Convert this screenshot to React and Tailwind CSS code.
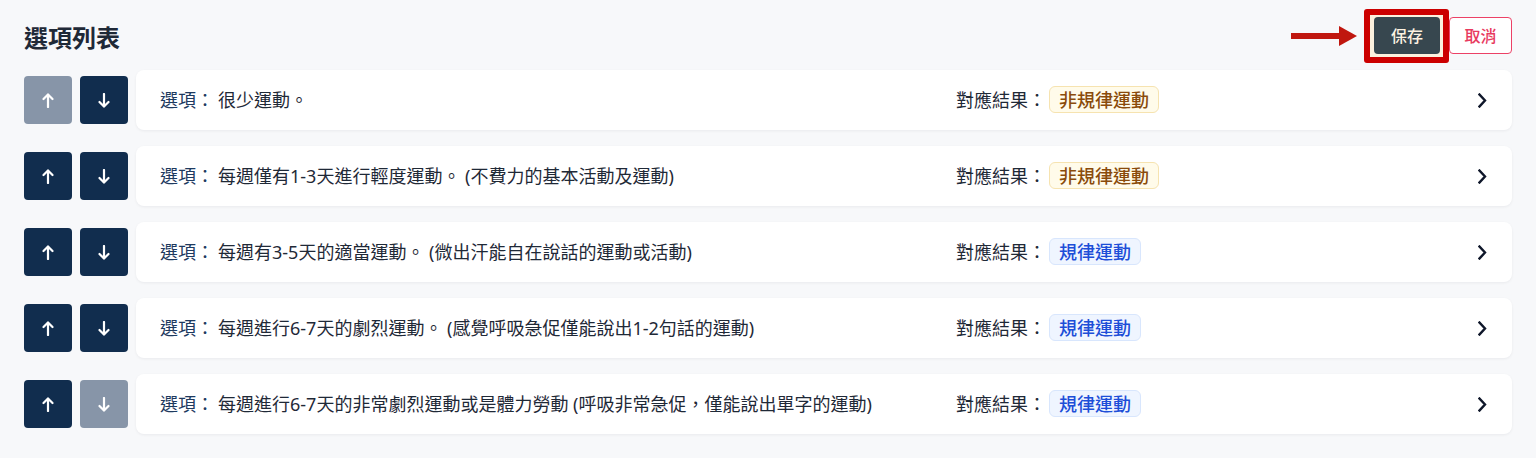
import React from "react";

const options = [
  { text: "很少運動。", result: "非規律運動", tone: "amber", upDisabled: true },
  { text: "每週僅有1-3天進行輕度運動。 (不費力的基本活動及運動)", result: "非規律運動", tone: "amber" },
  { text: "每週有3-5天的適當運動。 (微出汗能自在說話的運動或活動)", result: "規律運動", tone: "blue" },
  { text: "每週進行6-7天的劇烈運動。 (感覺呼吸急促僅能說出1-2句話的運動)", result: "規律運動", tone: "blue" },
  { text: "每週進行6-7天的非常劇烈運動或是體力勞動 (呼吸非常急促，僅能說出單字的運動)", result: "規律運動", tone: "blue", downDisabled: true },
];

const ArrowIcon = ({ down }) => (
  <svg width="12" height="15" viewBox="0 0 12 15" fill="none" stroke="currentColor" strokeWidth="2.2" strokeLinecap="round" strokeLinejoin="round" className={down ? "rotate-180" : ""}>
    <polyline points="1.5,6 6,1.5 10.5,6" />
    <line x1="6" y1="1.8" x2="6" y2="14" />
  </svg>
);

const MoveButton = ({ down, disabled }) => (
  <button
    className={`w-12 h-12 rounded flex items-center justify-center text-white ${
      disabled ? "bg-[#8795a8]" : "bg-[#112d4e]"
    }`}
  >
    <ArrowIcon down={down} />
  </button>
);

const Badge = ({ tone, children }) => (
  <span
    className={`inline-flex items-center h-[27px] px-[9px] rounded-md border text-[18px] font-medium leading-none ${
      tone === "amber"
        ? "bg-[#fffbea] border-[#f6e3b0] text-[#8a4b0b]"
        : "bg-[#eff5ff] border-[#d8e6fd] text-[#1d4ed8]"
    }`}
  >
    {children}
  </span>
);

export default function App() {
  return (
    <div
      className="min-h-[458px] bg-[#f7f8fa] px-6 pt-[17px] pb-6"
      style={{ fontFamily: '"Noto Sans", "Noto Sans CJK TC", sans-serif' }}
    >
      {/* Header */}
      <div className="flex items-center justify-between h-[37px] mb-4">
        <h1 className="text-[24px] font-bold text-[#1f2937] pt-1">選項列表</h1>
        <div className="flex items-center gap-[9px]">
          <div className="relative">
            {/* annotation arrow */}
            <div className="absolute right-[83px] top-[9px] flex items-center">
              <div className="w-[48px] h-[6px] bg-[#c0170f]" />
              <div className="w-0 h-0 border-y-[10.5px] border-y-transparent border-l-[18px] border-l-[#c0170f]" />
            </div>
            {/* annotation box */}
            <div className="absolute -left-[10px] -right-[9px] -top-[8px] -bottom-[9px] border-[6px] border-[#cc0000] bg-[#fcf1de] rounded-[3px]" />
            <button className="relative w-[66px] h-[37px] rounded bg-[#37474f] text-[#fdf3e2] text-[16px] font-medium">
              保存
            </button>
          </div>
          <button className="w-[63px] h-[37px] rounded border border-[#ec4166] bg-white text-[#e83a5f] text-[16px] font-medium">
            取消
          </button>
        </div>
      </div>

      {/* Rows */}
      <div className="flex flex-col gap-4">
        {options.map((o, i) => (
          <div key={i} className="flex items-center gap-2">
            <MoveButton disabled={o.upDisabled} />
            <MoveButton down disabled={o.downDisabled} />
            <div className="flex-1 h-[60px] bg-white rounded-lg shadow-[0_1px_3px_rgba(15,23,42,0.06)] flex items-center pl-6 pr-[25px] text-[18px]">
              <div className="w-[796px] flex items-center">
                <span className="text-[#1e3a5f]">選項：</span>
                <span className="ml-1 text-[#1f2937]">{o.text}</span>
              </div>
              <div className="flex items-center">
                <span className="text-[#1f2937]">對應結果：</span>
                <span className="ml-[3px]">
                  <Badge tone={o.tone}>{o.result}</Badge>
                </span>
              </div>
              <div className="flex-1" />
              <svg width="9" height="15" viewBox="0 0 9 15" fill="none" stroke="#0f172a" strokeWidth="2.4" strokeLinecap="square">
                <polyline points="1.5,1.5 7,7.5 1.5,13.5" />
              </svg>
            </div>
          </div>
        ))}
      </div>
    </div>
  );
}
